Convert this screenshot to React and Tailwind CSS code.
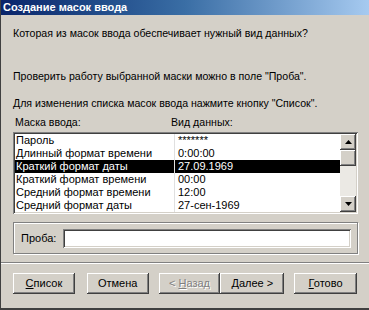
const ROWS = [
  { mask: 'Пароль', data: '*******' },
  { mask: 'Длинный формат времени', data: '0:00:00' },
  { mask: 'Краткий формат даты', data: '27.09.1969', sel: true },
  { mask: 'Краткий формат времени', data: '00:00' },
  { mask: 'Средний формат времени', data: '12:00' },
  { mask: 'Средний формат даты', data: '27-сен-1969' },
]

const raised =
  'shadow-[inset_-1px_-1px_0_#404040,inset_1px_1px_0_#ffffff,inset_-2px_-2px_0_#808080,inset_2px_2px_0_#d4d0c8]'
const sunken =
  'shadow-[inset_1px_1px_0_#808080,inset_-1px_-1px_0_#ffffff,inset_2px_2px_0_#404040,inset_-2px_-2px_0_#d4d0c8]'

function Btn({ children, w, disabled }) {
  return (
    <div
      className={`h-[21px] ${w} ${raised} bg-[#d4d0c8] flex items-center justify-center ${
        disabled ? 'text-[#808080] [text-shadow:1px_1px_0_#ffffff]' : 'text-black'
      }`}
    >
      {children}
    </div>
  )
}

function Arrow({ up }) {
  return (
    <div className={`w-[16px] h-[16px] ${raised} bg-[#d4d0c8] flex items-center justify-center`}>
      <svg width="7" height="4" viewBox="0 0 7 4">
        {up ? <polygon points="3.5,0 7,4 0,4" fill="#000" /> : <polygon points="0,0 7,0 3.5,4" fill="#000" />}
      </svg>
    </div>
  )
}

export default function App() {
  return (
    <div
      className="w-[369px] h-[310px] bg-[#d4d0c8] flex flex-col text-[11px] leading-[13px] text-black overflow-hidden border-l border-b-2 border-[#404040]"
      style={{ fontFamily: '"Liberation Sans", Arial, sans-serif' }}
    >
      {/* Заголовок */}
      <div className="h-[15px] bg-gradient-to-r from-[#0a246a] via-[#3a6ea5] to-[#a6caf0] flex items-center pl-[2px]">
        <span className="text-white font-bold text-[11px]">Создание масок ввода</span>
      </div>

      <div className="px-[12px]">
        <div className="text-[10.6px]">
          <p className="mt-[12px]">Которая из масок ввода обеспечивает нужный вид данных?</p>
          <p className="mt-[30px]">Проверить работу выбранной маски можно в поле "Проба".</p>
          <p className="mt-[14px]">Для изменения списка масок ввода нажмите кнопку "Список".</p>

          <div className="mt-[6px] flex">
            <span className="w-[158px] pl-[2px]">Маска ввода:</span>
            <span>Вид данных:</span>
          </div>
        </div>

        {/* Список */}
        <div className={`mt-[3px] w-[345px] h-[82px] bg-white ${sunken} p-[2px] flex`}>
          <div className="flex-1 flex flex-col relative">
            <div className="absolute left-[159px] top-0 bottom-0 w-px bg-[#e0e0e0]" />
            {ROWS.map(r => (
              <div
                key={r.mask}
                className={`h-[13px] flex items-center ${r.sel ? 'bg-black text-white' : ''}`}
              >
                <span className="w-[163px] pl-[1px] whitespace-nowrap">{r.mask}</span>
                <span className="whitespace-nowrap">{r.data}</span>
              </div>
            ))}
          </div>
          <div className="w-[16px] flex flex-col">
            <Arrow up />
            <div className={`h-[16px] ${raised} bg-[#d4d0c8]`} />
            <div className="flex-1 bg-[#ebe9e4]" />
            <Arrow />
          </div>
        </div>

        {/* Проба */}
        <div className="mt-[8px] w-[345px] h-[32px] border border-[#808080] shadow-[inset_1px_1px_0_#ffffff,1px_1px_0_#ffffff] flex items-center pl-[7px] pr-[6px]">
          <span className="w-[42px]">Проба:</span>
          <div className={`flex-1 h-[19px] bg-white ${sunken}`} />
        </div>
      </div>

      <div className="mt-[8px] h-[2px] border-t border-b border-t-[#808080] border-b-white" />

      <div className="mt-[9px] px-[12px] flex">
        <Btn w="w-[62px]">
          <span><u>С</u>писок</span>
        </Btn>
        <div className="w-[12px]" />
        <Btn w="w-[62px]">Отмена</Btn>
        <div className="w-[10px]" />
        <Btn w="w-[62px]" disabled>
          <span>&lt; <u>Н</u>азад</span>
        </Btn>
        <Btn w="w-[64px]">
          <span><u>Д</u>алее &gt;</span>
        </Btn>
        <div className="w-[10px]" />
        <Btn w="w-[63px]">
          <span><u>Г</u>отово</span>
        </Btn>
      </div>
    </div>
  )
}
